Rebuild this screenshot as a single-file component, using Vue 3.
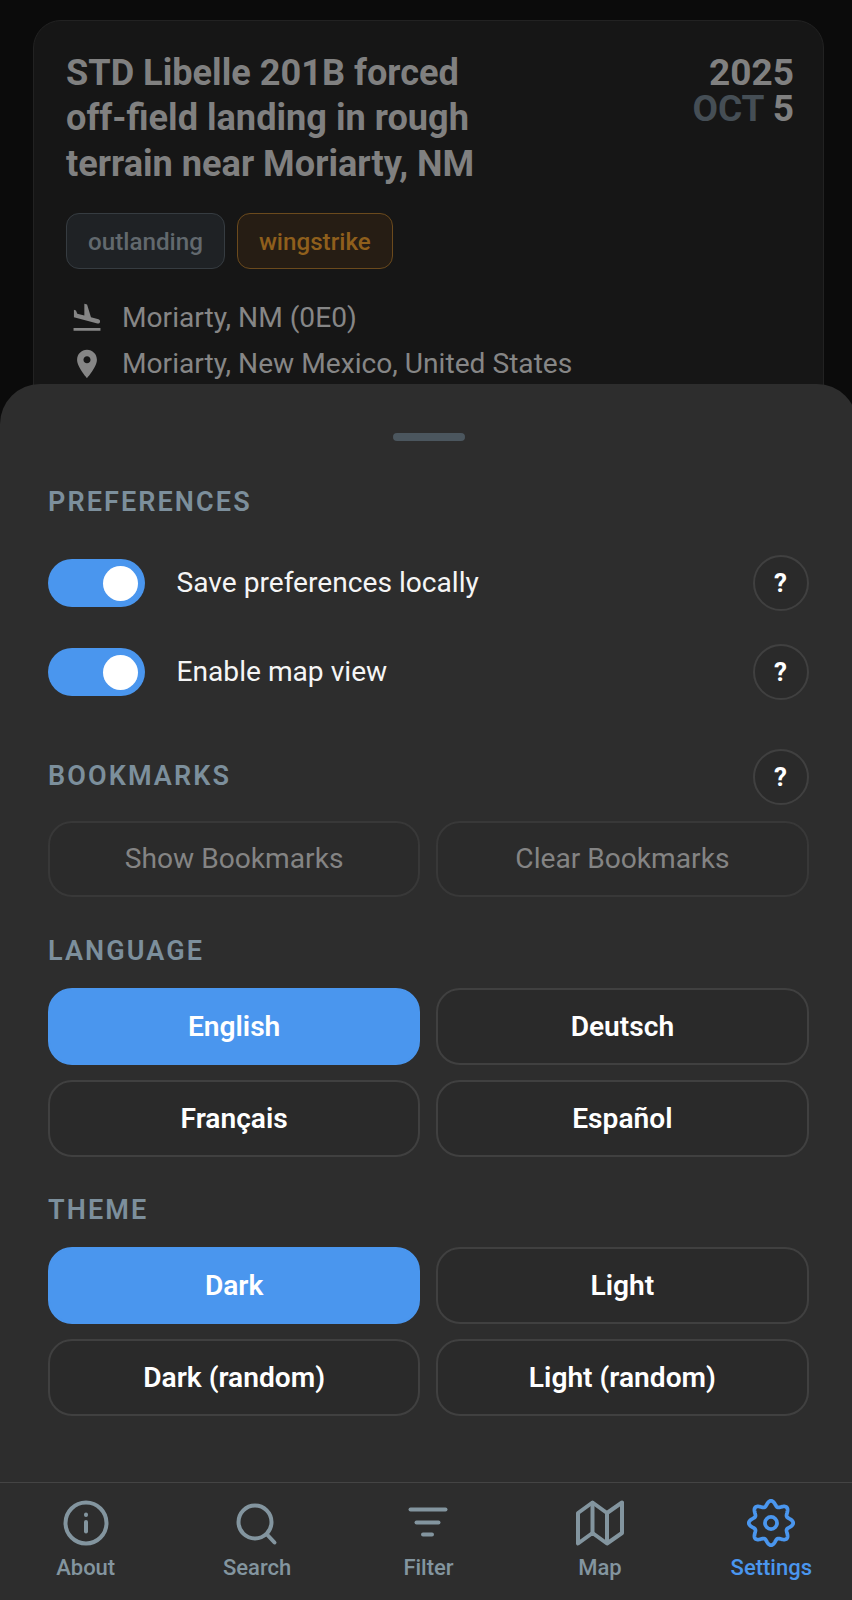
<script setup>
const toggles = [
  { id: 'save', label: 'Save preferences locally' },
  { id: 'map', label: 'Enable map view' }
]
const languages = ['English', 'Deutsch', 'Français', 'Español']
const themes = ['Dark', 'Light', 'Dark (random)', 'Light (random)']

// gear outline, eight rounded lobes
const gearPath = () => {
  const pts = []
  for (let i = 0; i < 240; i++) {
    const t = (i / 240) * Math.PI * 2
    const r = 9.4 + 1.25 * Math.cos(8 * t)
    pts.push(`${(12 + r * Math.sin(t)).toFixed(2)} ${(12 - r * Math.cos(t)).toFixed(2)}`)
  }
  return 'M' + pts.join('L') + 'Z'
}
const gear = gearPath()
</script>

<template>
  <div class="viewport">
    <div class="page">
      <article class="card">
        <header class="card-head">
          <h1 class="title">STD Libelle 201B forced off-field landing in rough terrain near Moriarty, NM</h1>
          <div class="date">
            <div>2025</div>
            <div><span class="month">OCT</span> 5</div>
          </div>
        </header>
        <div class="tags">
          <span class="tag tag-grey">outlanding</span>
          <span class="tag tag-orange">wingstrike</span>
        </div>
        <div class="meta">
          <svg viewBox="0 0 24 24" width="34" height="34" fill="currentColor">
            <path d="M2.5 19h19v2h-19v-2zm16.84-3.15c.8.21 1.62-.26 1.84-1.06.21-.8-.26-1.62-1.06-1.84l-5.31-1.42-2.76-9.02L10.12 2v8.28L5.15 8.95l-.93-2.32-1.45-.39v5.17l16.57 4.44z"/>
          </svg>
          <span>Moriarty, NM (0E0)</span>
        </div>
        <div class="meta">
          <svg viewBox="0 0 24 24" width="34" height="34" fill="currentColor">
            <path d="M12 2C8.13 2 5 5.13 5 9c0 5.25 7 13 7 13s7-7.75 7-13c0-3.87-3.13-7-7-7zm0 9.5c-1.38 0-2.5-1.12-2.5-2.5s1.12-2.5 2.5-2.5 2.5 1.12 2.5 2.5-1.12 2.5-2.5 2.5z"/>
          </svg>
          <span>Moriarty, New Mexico, United States</span>
        </div>
      </article>

      <section class="sheet">
        <div class="handle"></div>

        <div class="sheet-body">
          <h2 class="label first">PREFERENCES</h2>
          <div v-for="t in toggles" :key="t.id" class="row">
            <span class="switch"><span class="knob"></span></span>
            <span class="row-text">{{ t.label }}</span>
            <button class="help">?</button>
          </div>

          <div class="label-row">
            <h2 class="label">BOOKMARKS</h2>
            <button class="help">?</button>
          </div>
          <div class="grid bookmarks">
            <button class="opt muted">Show Bookmarks</button>
            <button class="opt muted">Clear Bookmarks</button>
          </div>

          <h2 class="label section">LANGUAGE</h2>
          <div class="grid">
            <button v-for="(l, i) in languages" :key="l" class="opt" :class="{ active: i === 0 }">{{ l }}</button>
          </div>

          <h2 class="label section theme">THEME</h2>
          <div class="grid">
            <button v-for="(l, i) in themes" :key="l" class="opt" :class="{ active: i === 0 }">{{ l }}</button>
          </div>
        </div>

        <nav class="nav">
          <div class="nav-item">
            <svg viewBox="0 0 48 48" width="48" height="48" fill="none" stroke="currentColor" stroke-width="4" stroke-linecap="round">
              <circle cx="24" cy="24" r="20.500"/>
              <path d="M24 23v9.500"/>
              <path d="M24 15.500v.4"/>
            </svg>
            <span>About</span>
          </div>
          <div class="nav-item">
            <svg viewBox="0 0 48 48" width="48" height="48" fill="none" stroke="currentColor" stroke-width="4" stroke-linecap="round">
              <circle cx="22" cy="23" r="16.500"/>
              <path d="M34 35.500l7.500 8"/>
            </svg>
            <span>Search</span>
          </div>
          <div class="nav-item">
            <svg viewBox="0 0 48 48" width="48" height="48" fill="none" stroke="currentColor" stroke-width="4" stroke-linecap="round">
              <path d="M6.500 10.500h35"/>
              <path d="M12.500 23.500h22"/>
              <path d="M19 35.500h9"/>
            </svg>
            <span>Filter</span>
          </div>
          <div class="nav-item">
            <svg viewBox="0 0 48 48" width="48" height="48" fill="none" stroke="currentColor" stroke-width="4" stroke-linejoin="round">
              <path d="M2 14L16.500 3.500 31 14 46 3.500V34L31 44.500 16.500 34 2 44.500z"/>
              <path d="M16.500 3.500V34"/>
              <path d="M31 14V44.500"/>
            </svg>
            <span>Map</span>
          </div>
          <div class="nav-item current">
            <svg viewBox="0 0 24 24" width="50" height="50" fill="none" stroke="currentColor" stroke-width="1.8" stroke-linejoin="round">
              <path :d="gear"/>
              <circle cx="12" cy="12" r="2.900"/>
            </svg>
            <span>Settings</span>
          </div>
        </nav>
      </section>
    </div>
  </div>
</template>

<style>
html, body {
  margin: 0;
  background: #0b0b0b;
}
</style>

<style scoped>
.viewport {
  width: 852px;
  height: 1600px;
  overflow: hidden;
}

/* the layout is a touch wider than the window, right edge gets clipped */
.page {
  position: relative;
  width: 857px;
  height: 1600px;
  overflow: hidden;
  padding: 20px 33px 0;
  box-sizing: border-box;
  background: #0b0b0b;
  font-family: Roboto, "Liberation Sans", sans-serif;
}

.card {
  box-sizing: border-box;
  height: 600px;
  padding: 28.5px 29px 0 32px;
  background: #161616;
  border: 1px solid #222;
  border-radius: 28px;
  color: #868686;
}

.card-head {
  display: flex;
  justify-content: space-between;
}

.title {
  width: 420px;
  margin: 0;
  font-size: 36.15px;
  line-height: 45.5px;
  font-weight: 700;
  color: #808080;
}

.date {
  font-size: 37px;
  line-height: 36px;
  font-weight: 700;
  text-align: right;
  color: #808080;
  margin-top: 5px;
}

.month {
  color: #454e55;
}

.tags {
  display: flex;
  gap: 12px;
  margin-top: 26.5px;
  margin-bottom: 26px;
}

.tag {
  box-sizing: border-box;
  height: 56px;
  padding: 2px 21px 0;
  display: flex;
  align-items: center;
  font-size: 24.2px;
  font-weight: 500;
  border-radius: 13px;
  border: 1.5px solid;
}

.tag-grey {
  color: #62696e;
  background: #1f2225;
  border-color: #363c41;
}

.tag-orange {
  color: #8f5f1c;
  background: #261d14;
  border-color: #6b4a1d;
}

.meta {
  display: flex;
  align-items: center;
  height: 46px;
  gap: 18px;
  font-size: 28.15px;
  color: #868686;
}

.meta svg {
  flex: none;
  margin-left: 4px;
}

.sheet {
  position: absolute;
  left: 0;
  right: 0;
  top: 384px;
  bottom: 0;
  display: flex;
  flex-direction: column;
  background: #2d2d2d;
  border-radius: 40px 40px 0 0;
}

.handle {
  align-self: center;
  flex: none;
  width: 72px;
  height: 8px;
  margin-top: 49px;
  border-radius: 4px;
  background: #4b565e;
}

.sheet-body {
  flex: 1;
  padding: 0 48.5px 0 48px;
}

.label {
  margin: 0;
  font-size: 27px;
  line-height: 32px;
  font-weight: 600;
  letter-spacing: 2.1px;
  color: #7c8f9c;
}

.label.first {
  margin-top: 45px;
  margin-bottom: 37px;
}

.label.section {
  margin-top: 38px;
  margin-bottom: 21px;
}

.label.section.theme {
  margin-top: 36.5px;
}

.row {
  display: flex;
  align-items: center;
  height: 56px;
  margin-bottom: 33px;
}

.switch {
  flex: none;
  width: 97px;
  height: 48px;
  box-sizing: border-box;
  padding: 0 7px;
  border-radius: 24px;
  background: #4a96ee;
  display: flex;
  align-items: center;
  justify-content: flex-end;
}

.knob {
  width: 35px;
  height: 35px;
  border-radius: 50%;
  background: #fff;
}

.row-text {
  flex: 1;
  margin-left: 31.5px;
  padding-bottom: 1px;
  font-size: 28.15px;
  color: #f5f5f5;
}

.help {
  flex: none;
  width: 56px;
  height: 56px;
  padding: 0;
  border-radius: 50%;
  border: 2px solid #404040;
  background: #2a2a2a;
  color: #fff;
  font-family: inherit;
  font-size: 26px;
  font-weight: 700;
}

.label-row {
  display: flex;
  align-items: center;
  justify-content: space-between;
  height: 56px;
  margin-top: 48.5px;
}

.label-row .label {
  padding-bottom: 2px;
}

.grid {
  display: grid;
  grid-template-columns: 1fr 1fr;
  column-gap: 16px;
  row-gap: 15.5px;
}

.grid.bookmarks {
  margin-top: 16px;
}

.opt {
  height: 77px;
  padding: 0;
  border-radius: 24px;
  border: 2px solid #404040;
  background: #2a2a2a;
  color: #fff;
  font-family: inherit;
  font-size: 28.15px;
  font-weight: 600;
}

.opt.muted {
  height: 76px;
  border-color: #383838;
  color: #848484;
  background: #2b2b2b;
  font-weight: 400;
}

.opt.active {
  background: #4a96ee;
  border-color: #4a96ee;
}

.nav {
  flex: none;
  display: grid;
  grid-template-columns: repeat(5, 1fr);
  height: 118px;
  box-sizing: border-box;
  border-top: 1.5px solid #444;
  padding-top: 15px;
}

.nav-item {
  display: flex;
  flex-direction: column;
  align-items: center;
  color: #83959f;
  font-size: 22px;
  font-weight: 500;
}

.nav-item svg {
  height: 50px;
  flex: none;
}

.nav-item span {
  margin-top: 7px;
  line-height: 26px;
}

.nav-item.current {
  color: #4a96ee;
}
</style>
